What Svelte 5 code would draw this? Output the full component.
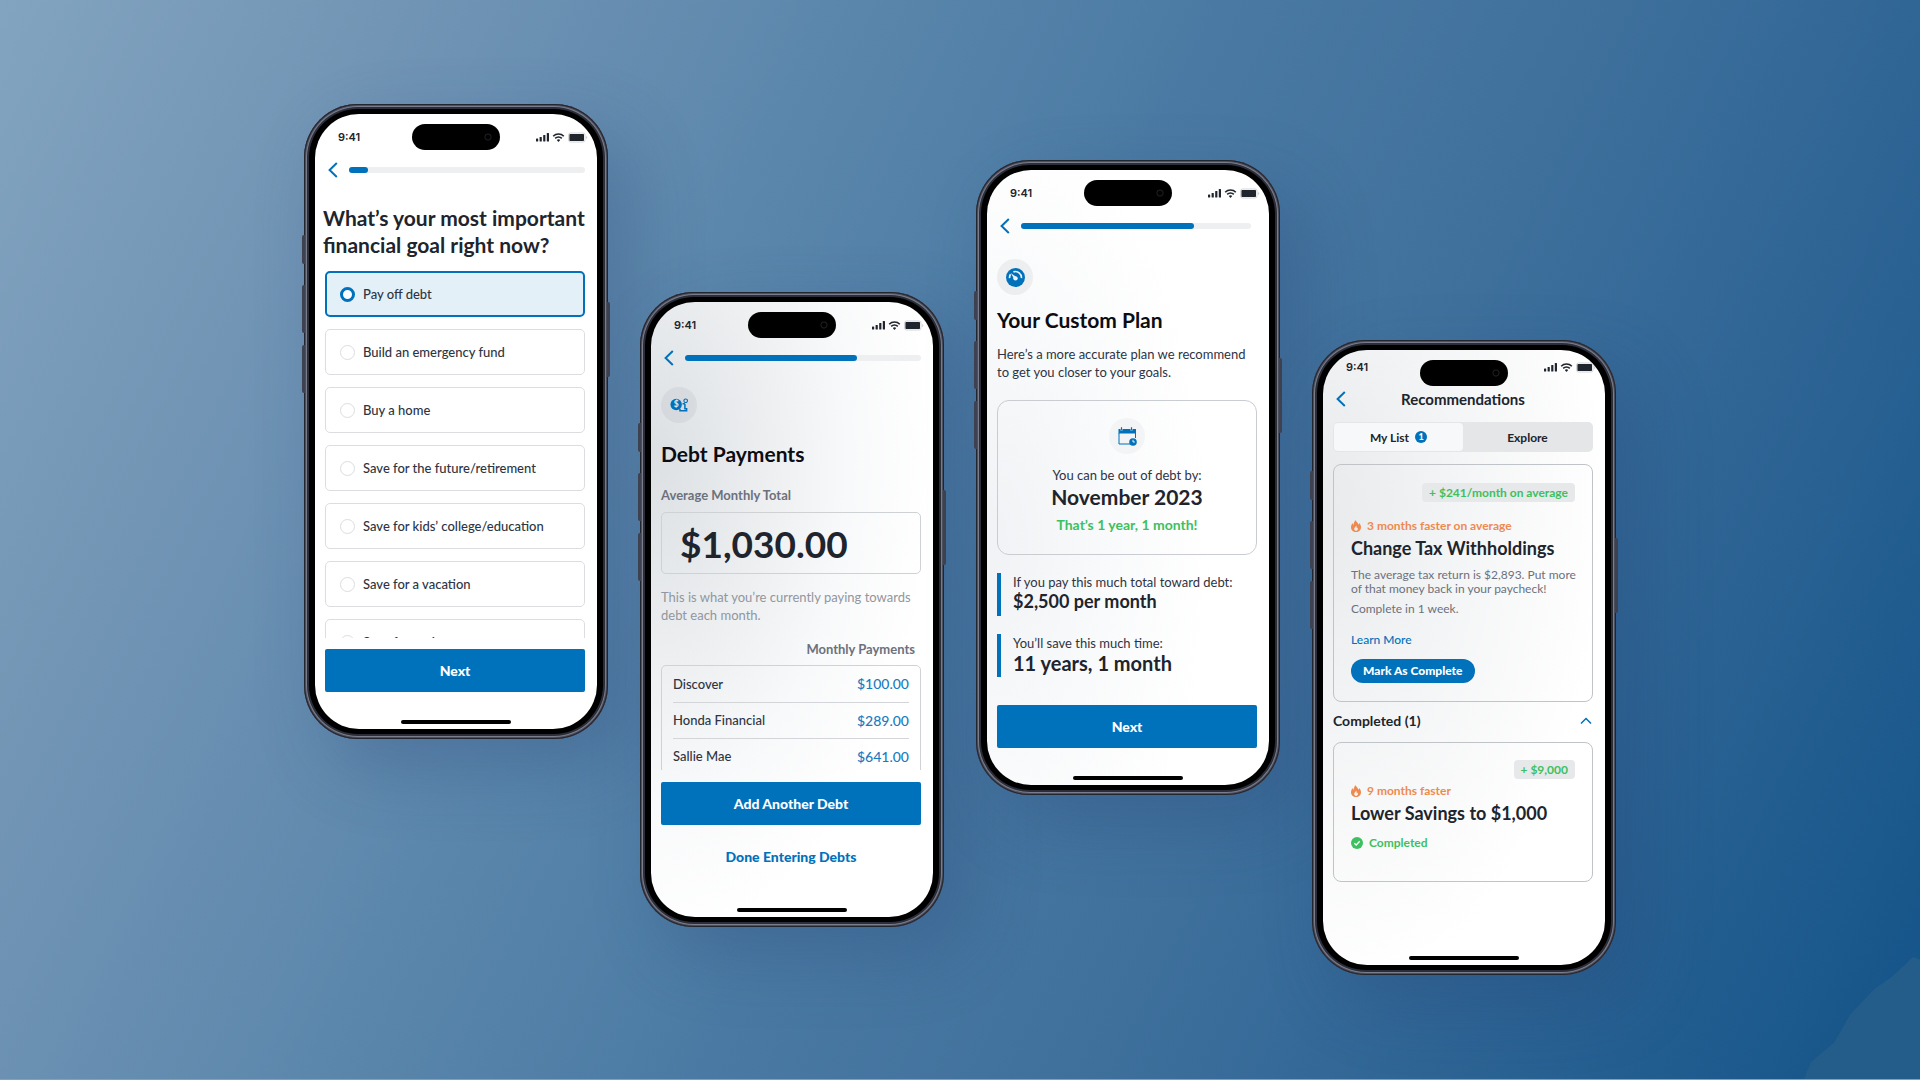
<script>
  let goal = $state("debt");
  let tab = $state("list");
  let showCompleted = $state(true);

  const goals = [
    { id: "debt", label: "Pay off debt" },
    { id: "fund", label: "Build an emergency fund" },
    { id: "home", label: "Buy a home" },
    { id: "future", label: "Save for the future/retirement" },
    { id: "kids", label: "Save for kids’ college/education" },
    { id: "vacation", label: "Save for a vacation" },
    { id: "trip", label: "Save for a trip" }
  ];

  const debts = [
    { name: "Discover", amount: "$100.00" },
    { name: "Honda Financial", amount: "$289.00" },
    { name: "Sallie Mae", amount: "$641.00" }
  ];
</script>

{#snippet statusBar()}
  <div class="status">
    <span class="time">9:41</span>
    <svg class="status-icons" viewBox="0 0 52 12" aria-hidden="true">
      <rect x="0" y="7.5" width="2.2" height="3" rx=".6" />
      <rect x="3.6" y="6" width="2.2" height="4.5" rx=".6" />
      <rect x="7.2" y="4" width="2.2" height="6.5" rx=".6" />
      <rect x="10.8" y="2" width="2.2" height="8.5" rx=".6" />
      <path d="M17.2 5.200a7.400 7.400 0 0 1 10.600 0M19.200 7.400a4.600 4.600 0 0 1 6.600 0" fill="none" stroke="currentColor" stroke-width="1.600" />
      <path d="M22.5 10.9l-1.7-1.8a2.4 2.4 0 0 1 3.4 0z" />
      <rect x="32.5" y="2" width="16.5" height="9" rx="2" fill="none" stroke="#c9ccd1" stroke-width=".8" />
      <rect x="33.4" y="3" width="14.6" height="7" rx=".8" />
      <path d="M50.2 5v3a1.6 1.6 0 0 0 0-3z" fill="#c9ccd1" />
    </svg>
  </div>
{/snippet}

{#snippet backButton()}
  <button class="back" type="button" aria-label="Back">
    <svg viewBox="0 0 10 16" aria-hidden="true"><path d="M8.8 1L1.6 8l7.2 7" /></svg>
  </button>
{/snippet}

{#snippet progressNav(percent)}
  <div class="nav">
    {@render backButton()}
    <div class="track" role="progressbar" aria-label="Progress" aria-valuenow={percent} aria-valuemin="0" aria-valuemax="100">
      <div class="fill" style="width: {percent}%"></div>
    </div>
  </div>
{/snippet}

{#snippet hardware()}
  <i class="key mute"></i>
  <i class="key up"></i>
  <i class="key down"></i>
  <i class="key power"></i>
  <i class="island"></i>
  <i class="home-bar"></i>
{/snippet}

{#snippet flame()}
  <svg class="flame" viewBox="0 0 10 12" aria-hidden="true">
    <path fill-rule="evenodd" d="M4.200 0c.4 1.500 3 2.400 3.200 4.800.5-.4.7-1 .7-1.700C9.300 4.300 10 5.700 10 7.200 10 9.900 7.800 12 5 12S0 9.900 0 7.200C0 5.500.8 4.100 1.800 3c0 .9.200 1.500.7 2C2.400 3 3.700 1.800 4.200 0zM5.100 5.400C4.900 6.700 3.200 7.400 3.200 9c0 1.100.8 1.800 1.800 1.800S6.900 10 6.900 9c0-.6-.2-1.100-.6-1.500-.1.400-.3.600-.6.700.1-1-.1-2.100-.6-2.800z" />
  </svg>
{/snippet}

<main class="stage">
  <section class="phone first">
    {@render hardware()}
    <div class="screen">
      {@render statusBar()}
      {@render progressNav(8)}
      <h1 class="question">What’s your most important financial goal right now?</h1>
      <div class="options" role="radiogroup" aria-label="Financial goal">
        {#each goals as item (item.id)}
          <label class="option" class:selected={goal === item.id}>
            <input type="radio" name="goal" value={item.id} bind:group={goal} />
            <span>{item.label}</span>
          </label>
        {/each}
      </div>
      <button class="primary" type="button">Next</button>
    </div>
  </section>

  <section class="phone second">
    {@render hardware()}
    <div class="screen shade-strong">
      {@render statusBar()}
      {@render progressNav(73)}
      <div class="bubble">
        <svg viewBox="0 0 20 16" aria-hidden="true">
          <circle cx="6.500" cy="7" r="6" />
          <text x="6.500" y="10" text-anchor="middle" class="coin">$</text>
          <path d="M10.500 11.500v2h7v-2h-1.800V6.500M13.200 6.200h2.500" fill="none" stroke="currentColor" stroke-width="1.600" />
          <circle cx="16.500" cy="3" r="1.900" fill="none" stroke="currentColor" stroke-width="1.200" />
        </svg>
      </div>
      <h1>Debt Payments</h1>
      <label class="field-label" for="total">Average Monthly Total</label>
      <input class="total" id="total" type="text" value="$1,030.00" />
      <p class="hint">This is what you’re currently paying towards debt each month.</p>
      <div class="payments">
        <h2 id="payments-title">Monthly Payments</h2>
        <div class="table-box">
          <table aria-labelledby="payments-title">
            <tbody>
              {#each debts as debt}
                <tr>
                  <th scope="row">{debt.name}</th>
                  <td>{debt.amount}</td>
                </tr>
              {/each}
            </tbody>
          </table>
        </div>
      </div>
      <button class="primary" type="button">Add Another Debt</button>
      <button class="text-button" type="button">Done Entering Debts</button>
    </div>
  </section>

  <section class="phone third">
    {@render hardware()}
    <div class="screen shade-light">
      {@render statusBar()}
      {@render progressNav(75)}
      <div class="bubble">
        <svg viewBox="0 0 18 18" aria-hidden="true">
          <circle cx="9" cy="9" r="9" />
          <path d="M3.400 9.600A5.700 5.700 0 0 1 4.300 6M7 3.700a5.700 5.700 0 0 1 7.600 5.900" fill="none" stroke="#eef1f4" stroke-width="1.600" />
          <circle cx="9" cy="9.800" r="2.100" fill="#eef1f4" />
          <path d="M4.400 4.800l5.400 3.800-1.800 2z" fill="#eef1f4" />
        </svg>
      </div>
      <h1>Your Custom Plan</h1>
      <p class="intro">Here’s a more accurate plan we recommend to get you closer to your goals.</p>
      <div class="plan-card">
        <div class="bubble">
          <svg viewBox="0 0 19 19" aria-hidden="true">
            <path d="M.5 2h2v1.600h2V2h8v1.600h2V2h3.500v4.500H.5z" />
            <path d="M3.500.2v3M13.500.2v3" fill="none" stroke="currentColor" stroke-width="1.200" />
            <path d="M1 6v11h11M17.500 6v5" fill="none" stroke="currentColor" stroke-width="1" />
            <circle cx="15" cy="15" r="3.800" />
            <path d="M15 12.800V15h1.900" fill="none" stroke="#fff" stroke-width=".9" />
          </svg>
        </div>
        <p>You can be out of debt by:</p>
        <strong>November 2023</strong>
        <em>That’s 1 year, 1 month!</em>
      </div>
      <div class="facts">
        <div class="fact">
          <span>If you pay this much total toward debt:</span>
          <strong>$2,500 per month</strong>
        </div>
        <div class="fact large">
          <span>You’ll save this much time:</span>
          <strong>11 years, 1 month</strong>
        </div>
      </div>
      <button class="primary" type="button">Next</button>
    </div>
  </section>

  <section class="phone fourth">
    {@render hardware()}
    <div class="screen shade-medium">
      {@render statusBar()}
      <div class="nav">
        {@render backButton()}
        <h1>Recommendations</h1>
      </div>
      <div class="tabs">
        <button type="button" class:active={tab === "list"} onclick={() => (tab = "list")}>My List <b>1</b></button>
        <button type="button" class:active={tab === "explore"} onclick={() => (tab = "explore")}>Explore</button>
      </div>
      <article class="card">
        <span class="chip">+ $241/month on average</span>
        <div class="faster">{@render flame()} 3 months faster on average</div>
        <h2>Change Tax Withholdings</h2>
        <p>The average tax return is $2,893. Put more of that money back in your paycheck!</p>
        <p>Complete in 1 week.</p>
        <a href="#learn">Learn More</a>
        <button class="pill" type="button">Mark As Complete</button>
      </article>
      <button class="toggle" type="button" aria-expanded={showCompleted} onclick={() => (showCompleted = !showCompleted)}>
        Completed (1)
        <svg viewBox="0 0 12 8" aria-hidden="true"><path d="M1 6.500l5-5 5 5" /></svg>
      </button>
      {#if showCompleted}
        <article class="card done">
          <span class="chip">+ $9,000</span>
          <div class="faster">{@render flame()} 9 months faster</div>
          <h2>Lower Savings to $1,000</h2>
          <div class="completed">
            <svg viewBox="0 0 12 12" aria-hidden="true">
              <circle cx="6" cy="6" r="6" />
              <path d="M3.300 6.200l1.900 1.800 3.500-3.700" fill="none" stroke="#fff" stroke-width="1.300" />
            </svg>
            Completed
          </div>
        </article>
      {/if}
    </div>
  </section>
</main>

<style>
  :global(body) {
    margin: 0;
  }

  .stage {
    --blue: #0071bb;
    --ink: #20242c;
    --slate: #2e3442;
    --muted: #6c717d;
    --green: #3dc05f;
    --orange: #ee8a4f;
    position: relative;
    box-sizing: border-box;
    min-height: 100vh;
    display: flex;
    justify-content: center;
    align-items: flex-start;
    gap: 32px;
    padding: 104px 24px;
    border-bottom: 1px solid #7fa1bf;
    background: linear-gradient(116deg, #82a4c0 0%, #7295b5 16%, #5c87ac 34%, #4a7aa3 50%, #3f709c 66%, #2a6293 83%, #135388 100%);
    font-family: Lato, "Open Sans", sans-serif;
    color: var(--ink);
  }

  .stage::after {
    content: "";
    position: absolute;
    right: 0;
    bottom: 0;
    width: 116px;
    height: 122px;
    background: #245d8a;
    clip-path: polygon(0 100%, 6% 86%, 26% 70%, 40% 47%, 61% 26%, 76% 16%, 94% 0, 100% 2%, 100% 100%);
  }

  .stage *,
  .stage *::before {
    box-sizing: border-box;
  }

  .phone {
    position: relative;
    flex: none;
    width: 304px;
    height: 635px;
    padding: 10px 11px;
    border-radius: 54px;
    background: #000;
    box-shadow:
      inset 0 0 0 1px #23252f,
      inset 0 0 0 2px #4c4f5d,
      inset 0 0 0 3px #7a7d8c,
      inset 0 0 0 5px #2b2d38,
      24px 28px 70px rgba(40, 68, 120, 0.3);
  }

  .second {
    margin-top: 188px;
  }

  .third {
    margin-top: 56px;
  }

  .fourth {
    margin-top: 236px;
  }

  .key {
    position: absolute;
    left: -2px;
    width: 3px;
    border-radius: 2px 0 0 2px;
    background: #3e4250;
  }

  .mute {
    top: 131px;
    height: 29px;
  }

  .up {
    top: 181px;
    height: 48px;
  }

  .down {
    top: 241px;
    height: 48px;
  }

  .power {
    left: auto;
    right: -2px;
    top: 198px;
    height: 75px;
    border-radius: 0 2px 2px 0;
  }

  .island,
  .home-bar {
    position: absolute;
    z-index: 1;
    left: 50%;
    transform: translateX(-50%);
    background: #000;
  }

  .island {
    top: 20px;
    width: 88px;
    height: 26px;
    border-radius: 13px;
    background: radial-gradient(circle at 76px 13px, #000 2px, #1d1f24 3px, #000 4px);
  }

  .home-bar {
    bottom: 15px;
    width: 110px;
    height: 4px;
    border-radius: 2px;
  }

  .screen {
    display: flex;
    flex-direction: column;
    height: 100%;
    padding: 0 12px 37px 10px;
    border-radius: 44px;
    overflow: hidden;
    background: #fff;
  }

  .shade-strong {
    background: radial-gradient(ellipse 100% 80% at 0 25%, #dce0e3 0%, #eceef0 40%, #f8f9fa 70%, #fff 100%);
  }

  .shade-light {
    background: radial-gradient(ellipse 80% 70% at 0 60%, #f1f2f5 0%, #f9fafb 55%, #fff 100%);
  }

  .shade-medium {
    background: radial-gradient(ellipse 100% 80% at 0 25%, #e8eaec 0%, #f3f4f5 45%, #fff 100%);
  }

  button {
    padding: 0;
    border: 0;
    background: none;
    color: inherit;
    font: inherit;
    cursor: pointer;
  }

  h1,
  h2,
  p {
    margin: 0;
  }

  h1 {
    font-size: 21px;
    line-height: 26px;
    font-weight: 700;
    color: #0b0d12;
  }

  .status {
    flex: none;
    display: flex;
    align-items: center;
    justify-content: space-between;
    height: 46px;
    margin-right: -3px;
    padding-left: 13px;
  }

  .time {
    font: 600 11px/16px Inter, sans-serif;
  }

  .status-icons {
    width: 52px;
    height: 12px;
    fill: currentColor;
  }

  .nav {
    flex: none;
    display: flex;
    align-items: center;
    gap: 11px;
    height: 20px;
    padding-left: 3px;
  }

  .third .nav {
    padding-right: 6px;
  }

  .back {
    display: flex;
  }

  .back svg {
    width: 10px;
    height: 16px;
  }

  .back path,
  .toggle path {
    fill: none;
    stroke: var(--blue);
    stroke-width: 2;
  }

  .toggle path {
    stroke-width: 1.5;
  }

  .track {
    flex: 1;
    height: 6px;
    border-radius: 3px;
    background: #eeeff1;
  }

  .fill {
    height: 100%;
    border-radius: 3px;
    background: var(--blue);
  }

  .question {
    margin: 24px -8px 0 -2px;
    line-height: 27px;
    color: var(--ink);
  }

  .options {
    flex: 1;
    min-height: 0;
    display: flex;
    flex-direction: column;
    gap: 12px;
    margin: 13px 0 11px;
    overflow: hidden;
  }

  .option {
    flex: none;
    display: flex;
    align-items: center;
    gap: 8px;
    height: 46px;
    padding: 0 14px;
    border: 1px solid #dcdde0;
    border-radius: 5px;
    font-size: 13px;
    font-weight: 500;
    color: var(--slate);
    cursor: pointer;
  }

  .option.selected {
    padding: 0 13px;
    border: 2px solid var(--blue);
    background: #e4f0f8;
  }

  .option input {
    appearance: none;
    width: 15px;
    height: 15px;
    margin: 0;
    border: 1px solid #dcdde0;
    border-radius: 50%;
    background: #fff;
  }

  .option input:checked {
    border: 3px solid var(--blue);
  }

  .primary {
    flex: none;
    height: 43px;
    border-radius: 2px;
    background: var(--blue);
    color: #fff;
    font-size: 14px;
    font-weight: 900;
  }

  .text-button {
    align-self: center;
    margin: 22px 0 13px;
    line-height: 20px;
    font-size: 14px;
    font-weight: 900;
    color: var(--blue);
  }

  .bubble {
    flex: none;
    display: grid;
    place-items: center;
    width: 36px;
    height: 36px;
    border-radius: 50%;
    background: rgba(120, 130, 140, 0.1);
    color: var(--blue);
  }

  .bubble svg {
    width: 19px;
    height: 19px;
    fill: currentColor;
  }

  .coin {
    font: 900 9px Lato, sans-serif;
    fill: #dfe3e6;
  }

  .second .bubble {
    margin-top: 19px;
  }

  .second h1 {
    margin-top: 18px;
  }

  .field-label,
  .payments h2 {
    font-size: 13px;
    line-height: 18px;
    font-weight: 700;
    color: var(--muted);
  }

  .field-label {
    margin-top: 19px;
  }

  .total {
    width: 100%;
    height: 62px;
    margin: 8px 0 14px;
    padding: 0 18px;
    border: 1px solid #cfd2d5;
    border-radius: 5px;
    background: none;
    color: var(--ink);
    font: 700 37px Lato, sans-serif;
  }

  .hint {
    font-size: 13px;
    line-height: 18px;
    color: #92969e;
  }

  .payments {
    flex: 1;
    min-height: 0;
    margin: 16px 0 12px;
    overflow: hidden;
  }

  .payments h2 {
    padding-right: 6px;
    text-align: right;
  }

  .table-box {
    margin-top: 7px;
    padding: 0 11px;
    border: 1px solid #d0d3d6;
    border-radius: 5px;
  }

  table {
    width: 100%;
    border-collapse: collapse;
    font-size: 14px;
  }

  tr + tr {
    border-top: 1px solid #d3d5d8;
  }

  th,
  td {
    height: 36px;
    padding: 0;
    font-weight: 500;
    text-align: left;
    color: var(--slate);
  }

  th {
    font-size: 13px;
  }

  td {
    text-align: right;
    color: #1a7cc0;
  }

  .third .bubble {
    margin-top: 23px;
  }

  .third h1 {
    margin-top: 12px;
  }

  .intro {
    margin-top: 12px;
    padding-right: 4px;
    font-size: 13px;
    line-height: 18px;
    color: var(--slate);
  }

  .plan-card {
    display: flex;
    flex-direction: column;
    align-items: center;
    margin-top: 19px;
    padding: 17px 0 19px;
    border: 1px solid #c9ccd0;
    border-radius: 12px;
    font-size: 13px;
    line-height: 20px;
    color: var(--slate);
  }

  .plan-card .bubble {
    margin: 0 0 11px;
    background: #f2f4f6;
  }

  .plan-card strong {
    font-size: 21px;
    line-height: 24px;
    color: var(--ink);
  }

  .plan-card em {
    margin-top: 6px;
    font-size: 14px;
    font-style: normal;
    font-weight: 700;
    color: var(--green);
  }

  .facts {
    flex: 1;
    display: flex;
    flex-direction: column;
    gap: 18px;
    margin-top: 18px;
  }

  .fact {
    display: flex;
    flex-direction: column;
    height: 43px;
    padding-left: 12px;
    border-left: 4px solid var(--blue);
    font-size: 13px;
    line-height: 18px;
    white-space: nowrap;
    color: var(--slate);
  }

  .fact strong {
    font-size: 18px;
    line-height: 20px;
    color: var(--ink);
  }

  .fact.large strong {
    font-size: 20px;
    line-height: 22px;
  }

  .fourth .status {
    height: 34px;
  }

  .fourth .nav {
    height: 30px;
  }

  .fourth h1 {
    flex: 1;
    padding-right: 24px;
    font-size: 15px;
    line-height: 20px;
    text-align: center;
    color: var(--ink);
  }

  .tabs {
    flex: none;
    display: grid;
    grid-template-columns: 1fr 1fr;
    height: 30px;
    margin-top: 8px;
    padding: 1px;
    border-radius: 5px;
    background: #e4e6e8;
    font-size: 12px;
    font-weight: 700;
  }

  .tabs button {
    display: flex;
    align-items: center;
    justify-content: center;
    gap: 6px;
    border-radius: 4px;
  }

  .tabs .active {
    background: #f7f8f9;
  }

  .tabs b {
    width: 12px;
    height: 12px;
    border-radius: 50%;
    background: var(--blue);
    color: #fff;
    font-size: 9px;
    line-height: 12px;
  }

  .card {
    display: flex;
    flex-direction: column;
    align-items: flex-start;
    height: 238px;
    margin-top: 12px;
    padding: 18px 17px;
    border: 1px solid #c0c3c7;
    border-radius: 8px;
    font-size: 12px;
    line-height: 14px;
    color: var(--muted);
  }

  .chip {
    align-self: flex-end;
    padding: 0 7px;
    border-radius: 4px;
    background: #e6e8ea;
    font-size: 12px;
    line-height: 19px;
    font-weight: 700;
    color: var(--green);
  }

  .faster,
  .completed {
    display: flex;
    align-items: center;
    gap: 6px;
    font-size: 12px;
    line-height: 16px;
    font-weight: 700;
    color: var(--orange);
  }

  .faster {
    margin-top: 16px;
  }

  .flame {
    width: 10px;
    height: 12px;
    fill: currentColor;
  }

  .card h2 {
    margin: 2px 0 8px;
    font-size: 18px;
    line-height: 24px;
    font-weight: 700;
    white-space: nowrap;
    color: var(--ink);
  }

  .card p {
    margin: 0 -8px 6px 0;
  }

  .card a {
    margin-top: 11px;
    font-weight: 500;
    color: var(--blue);
    text-decoration: none;
  }

  .pill {
    margin-top: 12px;
    height: 24px;
    padding: 0 12px;
    border-radius: 12px;
    background: var(--blue);
    color: #fff;
    font-size: 12px;
    font-weight: 900;
  }

  .toggle {
    display: flex;
    align-items: center;
    justify-content: space-between;
    margin-top: 9px;
    padding-right: 1px;
    font-size: 14px;
    line-height: 20px;
    font-weight: 700;
  }

  .toggle svg {
    width: 12px;
    height: 8px;
  }

  .card.done {
    height: 140px;
    margin-top: 11px;
    padding-top: 17px;
  }

  .done .faster {
    margin-top: 4px;
  }

  .completed {
    margin-top: 2px;
    color: var(--green);
  }

  .completed svg {
    width: 12px;
    height: 12px;
    fill: currentColor;
  }
</style>
